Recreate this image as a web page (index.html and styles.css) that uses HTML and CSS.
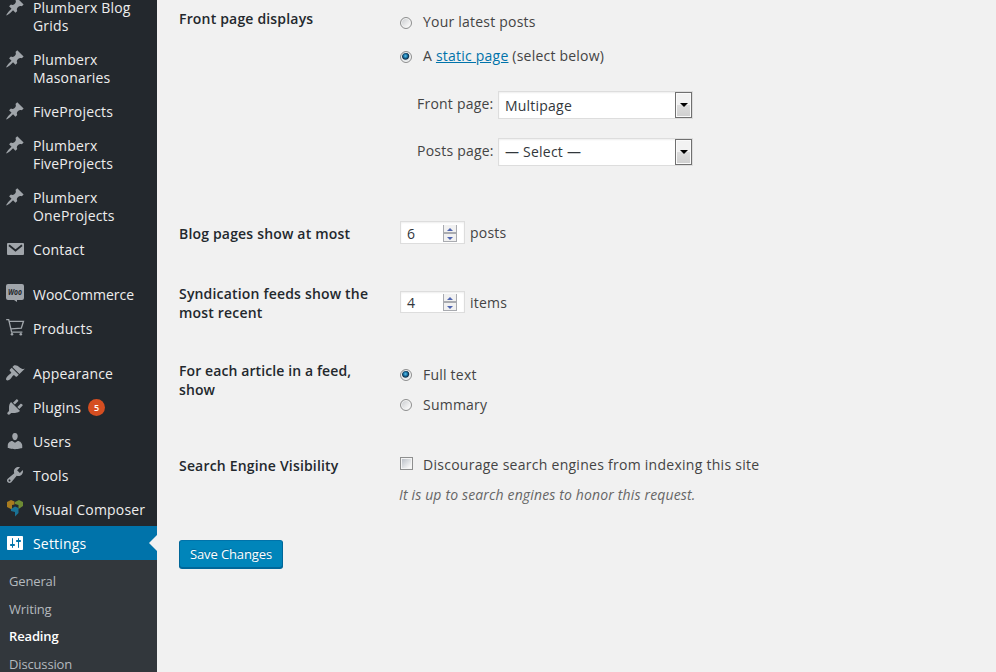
FILE: index.html
```html
<!DOCTYPE html>
<html lang="en">
<head>
<meta charset="utf-8">
<title>Reading Settings</title>
<link rel="stylesheet" href="styles.css">
</head>
<body>
<svg class="defs" width="0" height="0">
  <symbol id="pin" viewBox="0 0 20 20"><path d="M10.44 3.02l1.82-1.82 6.36 6.35-1.83 1.82c-1.05-.68-2.48-.57-3.41.36l-.75.75c-.92.93-1.04 2.35-.35 3.41l-1.83 1.82-2.41-2.41-2.8 2.79c-.42.42-3.38 2.71-3.8 2.29s1.86-3.39 2.28-3.81l2.79-2.79L4.1 9.36l1.83-1.82c1.05.69 2.48.57 3.4-.36l.75-.75c.93-.92 1.05-2.35.36-3.41z"/></symbol>
</svg>
<div class="admin">
  <nav class="sidebar">
    <ul class="menu">
      <li><svg class="icon"><use href="#pin"/></svg><span>Plumberx Blog<br>Grids</span></li>
      <li><svg class="icon"><use href="#pin"/></svg><span>Plumberx<br>Masonaries</span></li>
      <li><svg class="icon"><use href="#pin"/></svg><span>FiveProjects</span></li>
      <li><svg class="icon"><use href="#pin"/></svg><span>Plumberx<br>FiveProjects</span></li>
      <li><svg class="icon"><use href="#pin"/></svg><span>Plumberx<br>OneProjects</span></li>
      <li><svg class="icon" viewBox="0 0 20 20"><path d="M3 4h15q1 0 1 1v10q0 1-1 1H3q-1 0-1-1V5q0-1 1-1z"/><path class="cut" d="M4 6.2l6.5 5.3L17 6.2"/></svg><span>Contact</span></li>
      <li class="gap tight"><svg class="icon" viewBox="0 0 20 20"><path d="M3 0h14q2 0 2 2v12q0 2-2 2h-5v2l-3-2H3q-2 0-2-2V2q0-2 2-2z"/><text class="woo" x="10" y="11" textLength="14" lengthAdjust="spacingAndGlyphs">Woo</text></svg><span>WooCommerce</span></li>
      <li><svg class="icon" viewBox="0 0 20 20"><path class="line" d="M1.2 1.6h2.5L6.6 14.2h10.8M4.3 3.3h14.2l-2.2 6.8L6 10.800"/><circle cx="7" cy="16.2" r="1.3"/><circle cx="15.8" cy="16.2" r="1.3"/></svg><span>Products</span></li>
      <li class="gap"><svg class="icon" viewBox="0 0 20 20"><path d="M14.48 11.06L7.41 3.99l1.5-1.5c.5-.56 2.3-.47 3.51.32 1.21.8 1.43 1.28 2.91 2.1 1.18.64 2.45 1.26 4.45.85zm-.71.71L6.7 4.7 4.93 6.47c-.39.39-.39 1.02 0 1.41l1.06 1.06c.39.39.39 1.03 0 1.42-.6.6-1.43 1.11-2.21 1.69-.35.26-.7.53-1.01.84C1.43 14.23.4 16.08 1.4 17.07c.99 1 2.84-.03 4.18-1.36.31-.31.58-.66.85-1.02.57-.78 1.08-1.61 1.69-2.21.39-.39 1.02-.39 1.41 0l1.06 1.06c.39.39 1.02.39 1.41 0z"/></svg><span>Appearance</span></li>
      <li><svg class="icon" viewBox="0 0 20 20"><path d="M13.11 4.36L9.87 7.6 8 5.73l3.24-3.24c.35-.34 1.05-.2 1.56.32.52.51.66 1.21.31 1.55zm-8 1.77l.91-1.12 9.01 9.01-1.19.84c-.71.71-2.63 1.16-3.82 1.16H6.14L4.9 17.26c-.59.59-1.54.59-2.12 0-.59-.58-.59-1.53 0-2.12l1.24-1.24v-3.88c0-1.13.4-3.19 1.09-3.89zm7.26 3.97l3.24-3.24c.34-.35 1.04-.21 1.55.31.52.51.66 1.21.31 1.55l-3.24 3.25z"/></svg><span>Plugins</span><b class="count">5</b></li>
      <li><svg class="icon" viewBox="0 0 20 20"><path d="M10 9.25c-2.27 0-2.73-3.44-2.73-3.44C7 4.02 7.82 2 9.97 2c2.16 0 2.98 2.02 2.71 3.81 0 0-.41 3.44-2.68 3.44zm0 2.57L12.72 10c2.39 0 4.52 2.33 4.52 4.53v2.49s-3.65 1.13-7.24 1.13c-3.65 0-7.24-1.13-7.24-1.13v-2.49c0-2.25 1.94-4.48 4.47-4.48z"/></svg><span>Users</span></li>
      <li><svg class="icon" viewBox="0 0 20 20"><path d="M16.68 9.77c-1.34 1.34-3.3 1.67-4.95.99l-5.41 6.52c-.99.99-2.59.99-3.58 0s-.99-2.59 0-3.57l6.52-5.42c-.68-1.65-.35-3.61.99-4.95 1.28-1.28 3.12-1.62 4.72-1.06l-2.89 2.89 2.82 2.82 2.86-2.87c.53 1.58.18 3.39-1.08 4.65zM3.81 16.21c.4.39 1.04.39 1.43 0 .4-.4.4-1.04 0-1.43-.39-.4-1.03-.4-1.43 0-.39.39-.39 1.03 0 1.43z"/></svg><span>Tools</span></li>
      <li><svg class="icon" viewBox="0 0 20 20"><path fill="#a87b1f" d="M2 3l4-2 3.500 1.500v3L7 6v4.500L2 8z"/><path fill="#6d8b34" d="M10 3l4-2 4 2v4l-4.500 3V6L10 5z"/><path fill="#1a7295" d="M6 10l4-2.500L13.500 9v5L10 17.500V13l-4-1z"/></svg><span>Visual Composer</span></li>
      <li class="current"><svg class="icon" viewBox="0 0 20 20"><path d="M18 16V4c0-.55-.45-1-1-1H3c-.55 0-1 .45-1 1v12c0 .55.45 1 1 1h14c.55 0 1-.45 1-1zM8 11h1c.55 0 1 .45 1 1s-.45 1-1 1H8v1.500c0 .28-.22.5-.5.5s-.5-.22-.5-.5V13H6c-.55 0-1-.45-1-1s.45-1 1-1h1V5.500c0-.28.22-.5.5-.5s.5.22.5.5V11zm5-2h-1c-.55 0-1-.45-1-1s.45-1 1-1h1V5.500c0-.28.22-.5.5-.5s.5.22.5.5V7h1c.55 0 1 .45 1 1s-.45 1-1 1h-1v5.500c0 .28-.22.5-.5.5s-.5-.22-.5-.5V9z"/></svg><span>Settings</span></li>
    </ul>
    <ul class="submenu">
      <li>General</li>
      <li>Writing</li>
      <li class="active">Reading</li>
      <li>Discussion</li>
    </ul>
  </nav>
  <main class="content">
    <section class="row front">
      <h2>Front page displays</h2>
      <div class="field">
        <label class="option"><input type="radio" name="front"><span>Your latest posts</span></label>
        <label class="option"><input type="radio" name="front" checked><span>A <a href="#">static page</a> (select below)</span></label>
        <div class="picks">
          <div class="pick"><span>Front page:</span><div class="select"><span>Multipage</span><i class="drop"></i></div></div>
          <div class="pick"><span>Posts page:</span><div class="select"><span>— Select —</span><i class="drop"></i></div></div>
        </div>
      </div>
    </section>
    <section class="row blog">
      <h2>Blog pages show at most</h2>
      <div class="field amount"><div class="number"><span>6</span><i class="spin"></i></div><span>posts</span></div>
    </section>
    <section class="row feeds">
      <h2>Syndication feeds show the<br>most recent</h2>
      <div class="field amount"><div class="number"><span>4</span><i class="spin"></i></div><span>items</span></div>
    </section>
    <section class="row article">
      <h2>For each article in a feed,<br>show</h2>
      <div class="field">
        <label class="option"><input type="radio" name="feed" checked><span>Full text</span></label>
        <label class="option"><input type="radio" name="feed"><span>Summary</span></label>
      </div>
    </section>
    <section class="row search">
      <h2>Search Engine Visibility</h2>
      <div class="field">
        <label class="option"><input type="checkbox"><span>Discourage search engines from indexing this site</span></label>
        <p class="note">It is up to search engines to honor this request.</p>
      </div>
    </section>
    <button class="save">Save Changes</button>
  </main>
</div>
</body>
</html>
```
FILE: styles.css
```css
* { box-sizing: border-box; }
html, body { height: 100%; overflow: hidden; }
body {
  margin: 0;
  background: #f1f1f1;
  color: #444;
  font: 14px/20px "Open Sans", sans-serif;
  letter-spacing: .22px;
}
ul { list-style: none; margin: 0; padding: 0; }
.defs { display: block; }
.admin { display: flex; height: 672px; overflow: hidden; }

.sidebar { flex: none; width: 157px; background: #23282d; color: #eee; }
.menu { margin-top: -10px; letter-spacing: .18px; }
.menu li {
  display: flex;
  align-items: flex-start;
  padding: 9px 0 7px 5px;
  line-height: 18px;
  white-space: nowrap;
}
.menu li.gap { margin-top: 11px; }
.menu li.tight { letter-spacing: 0; }
.icon { flex: none; width: 20px; height: 20px; margin: -2px 8px -2px 0; fill: #a0a5aa; }
.icon .cut { fill: none; stroke: #23282d; stroke-width: 1.8; }
.icon .line { fill: none; stroke: #a0a5aa; stroke-width: 1.3; }
.icon .woo { fill: #23282d; font: italic bold 8px "Open Sans", sans-serif; text-anchor: middle; }
.count {
  width: 17px;
  height: 17px;
  margin-left: 7px;
  border-radius: 50%;
  background: #d54e21;
  color: #fff;
  font-size: 9px;
  font-weight: 600;
  line-height: 17px;
  text-align: center;
}
.menu li.current { position: relative; background: #0073aa; color: #fff; }
.current .icon { fill: #fff; }
.current::after {
  content: "";
  position: absolute;
  right: 0;
  top: 9px;
  border: 8px solid transparent;
  border-left: 0;
  border-right-color: #f1f1f1;
}
.submenu {
  height: 120px;
  padding: 8px 0 0 9px;
  background: #32373c;
  color: #b4b9be;
  font-size: 13px;
  line-height: 27.5px;
  letter-spacing: -.15px;
}
.submenu .active { color: #fff; font-weight: 600; }

.content { flex: 1; padding-left: 22px; }
.row { display: flex; }
.row h2 {
  flex: none;
  width: 221px;
  margin: 0;
  padding-top: 9px;
  color: #23282d;
  font-size: 14px;
  font-weight: 600;
  line-height: 19px;
  letter-spacing: .18px;
}
.row.article h2 { letter-spacing: .1px; }
.front { height: 215px; }
.blog { height: 60px; }
.feeds { height: 77px; }
.article { height: 95px; }
.search { height: 93px; }

.option { display: flex; align-items: center; height: 20px; }
.option input { flex: none; appearance: none; margin: 1px 11px 0 0; width: 12px; height: 12px; border: 1px solid #8e8f8f; }
.option input[type="radio"] {
  border-radius: 50%;
  background: linear-gradient(135deg, #c6c9cc, #f5f5f5 75%);
  box-shadow: inset 0 0 0 1px #f4f4f4;
}
.option input[type="radio"]:checked {
  background: radial-gradient(circle at 45% 40%, #5fc4ea 0, #1b78ab 1.8px, #10324c 3.2px, #e4e8ea 4.2px);
}
.option input[type="checkbox"] {
  width: 13px;
  height: 13px;
  margin: -3px 10px 0 0;
  background: linear-gradient(135deg, #b4bac2, #f6f6f6 80%);
  box-shadow: inset 0 0 0 1px #f4f4f4;
}
a { color: #0073aa; }
.front .field { padding-top: 12px; }
.front .option { margin-bottom: 14px; }
.picks { padding: 11px 0 0 17px; }
.pick { display: flex; align-items: center; height: 28px; margin-bottom: 19px; }
.pick > span { width: 81px; margin-top: -3px; }
.pick:first-child .select > span { padding-top: 1px; }
.select {
  display: flex;
  align-items: center;
  justify-content: space-between;
  width: 195px;
  height: 28px;
  padding-left: 6px;
  border: 1px solid #ddd;
  background: #fff;
  box-shadow: inset 0 1px 2px rgba(0, 0, 0, .07);
  color: #32373c;
}
.drop {
  display: flex;
  align-items: center;
  justify-content: center;
  width: 17px;
  height: 26px;
  border: 1px solid #707070;
  box-shadow: inset 0 0 0 1px #fafafa;
  background: linear-gradient(#f2f2f2 50%, #ddd 50%, #cfcfcf);
}
.drop::before { content: ""; border: 4px solid transparent; border-top-color: #000; border-bottom: 0; }

.amount { display: flex; align-items: flex-start; padding-top: 6px; }
.amount > span { margin: 2px 0 0 5px; }
.number {
  display: flex;
  justify-content: space-between;
  width: 65px;
  height: 23px;
  padding: 3px 7px 0 6px;
  border: 1px solid #ddd;
  background: #fff;
  box-shadow: inset 0 1px 2px rgba(0, 0, 0, .07);
  color: #32373c;
  line-height: 17px;
}
.feeds .amount { padding-top: 16px; }
.feeds .number { height: 22px; padding-top: 2px; }
.spin {
  display: grid;
  grid-template-rows: 8px 8px;
  justify-items: center;
  align-items: center;
  width: 14px;
  height: 17px;
  border: 1px solid #a9abb0;
  border-top: 0;
  background: linear-gradient(#f1f1f1 7px, #a9abb0 7px, #a9abb0 9px, #f1f1f1 9px);
}
.spin::before, .spin::after { content: ""; border: 3px solid transparent; }
.spin::before { border-bottom-color: #4f65b0; border-top: 0; }
.spin::after { border-top-color: #4f65b0; border-bottom: 0; margin-top: 2px; }

.article .field { padding-top: 13px; }
.article .option { margin-bottom: 10px; }
.article .option input { margin-top: -1px; }
.search .field { padding-top: 8px; }
.search .option { letter-spacing: .27px; }
.note { margin: 10px 0 0 -1px; color: #666; font-style: italic; letter-spacing: .15px; }
.save {
  display: block;
  width: 104px;
  height: 28px;
  padding: 0;
  border: 1px solid #006799;
  border-color: #0073aa #006799 #006799;
  border-radius: 3px;
  background: #0085ba;
  box-shadow: 0 1px 0 #006799;
  color: #fff;
  font: 13px/26px "Open Sans", sans-serif;
  letter-spacing: -.1px;
  text-shadow: 0 -1px 1px #006799;
}
```
